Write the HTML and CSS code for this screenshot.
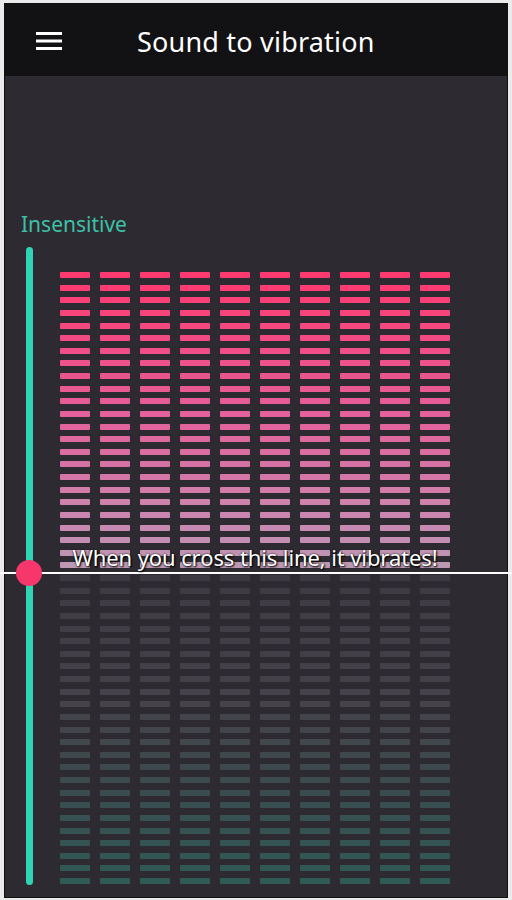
FILE: index.html
```html
<!DOCTYPE html>
<html lang="en">
<head>
<meta charset="utf-8">
<title>Sound to vibration</title>
<link rel="stylesheet" href="styles.css">
</head>
<body>
<div class="frame">
  <header class="appbar">
    <svg class="menu" width="26" height="18" viewBox="0 0 26 18">
      <rect x="0" y="0" width="26" height="3" fill="#fff"/>
      <rect x="0" y="7.5" width="26" height="3" fill="#fff"/>
      <rect x="0" y="15" width="26" height="3" fill="#fff"/>
    </svg>
    <h1 class="title">Sound to vibration</h1>
  </header>
  <main class="content">
    <div class="label">Insensitive</div>
    <div class="meter">
      <div class="track"></div>
      <div class="bars" id="bars">
        <div class="caption">When you cross this line, it vibrates!</div>
      </div>
    </div>
    <div class="threshold"></div>
    <div class="thumb"></div>
  </main>
</div>
<script src="script.js"></script>
</body>
</html>
```

FILE: styles.css
```css
html, body {
  margin: 0;
  padding: 0;
}
body {
  background: #ebebeb;
  font-family: "Noto Sans", "Open Sans", sans-serif;
}
.frame {
  margin: 3px 4px 0 4px;
  width: 502px;
  height: 893px;
  border: 1px solid #111;
  display: flex;
  flex-direction: column;
  background: #2e2a31;
}
.appbar {
  height: 70px;
  padding-top: 2px;
  background: #121113;
  display: flex;
  align-items: center;
  padding-left: 31px;
  flex: none;
}
.menu {
  display: block;
  flex: none;
}
.title {
  margin: 0 0 0 75px;
  padding-top: 2px;
  color: #fff;
  font-size: 27px;
  font-weight: 400;
  line-height: 32px;
  letter-spacing: 0.2px;
}
.content {
  position: relative;
  flex: 1;
  padding-top: 136px;
}
.label {
  margin-left: 16px;
  color: #3cc2a6;
  font-size: 21px;
  line-height: 24px;
  height: 24px;
}
.meter {
  margin-top: 11px;
  display: flex;
  padding-left: 21px;
}
.track {
  width: 7px;
  height: 638px;
  border-radius: 4px;
  background: #30d3b6;
  flex: none;
}
.bars {
  position: relative;
  margin-left: 27px;
  margin-top: 25px;
  display: flex;
  gap: 10px;
  width: 390px;
  height: 612px;
}
.col {
  width: 30px;
  height: 612px;
  display: flex;
  flex-direction: column;
  justify-content: space-between;
}
.bar {
  height: 6px;
  width: 30px;
  border-radius: 1px;
}
.caption {
  position: absolute;
  left: -30px;
  right: -30px;
  top: 271px;
  text-align: center;
  color: #fff;
  font-size: 22px;
  line-height: 28px;
  letter-spacing: -0.1px;
  text-shadow: 0 0 2px #000, 1px 1px 2px #000;
  white-space: nowrap;
  z-index: 1;
}
.threshold {
  position: absolute;
  left: -5px;
  right: -5px;
  top: 496px;
  height: 2px;
  background: #fff;
}
.thumb {
  position: absolute;
  left: 11px;
  top: 484px;
  width: 26px;
  height: 26px;
  border-radius: 50%;
  background: #f7366b;
}
```

FILE: script.js
```js
(function () {
  var ROWS = 49, COLS = 10, PITCH = 12.625, LINE = 300;
  var above = [[0, [254, 58, 112]], [140, [228, 96, 154]], [250, [200, 137, 176]], [300, [185, 155, 179]]];
  var below = [[300, [62, 58, 67]], [420, [70, 66, 75]], [520, [58, 76, 79]], [612, [47, 91, 86]]];
  function interp(stops, y) {
    for (var i = 0; i < stops.length - 1; i++) {
      var a = stops[i], b = stops[i + 1];
      if (y <= b[0]) {
        var t = (y - a[0]) / (b[0] - a[0]);
        if (t < 0) t = 0;
        var c = [0, 1, 2].map(function (k) { return Math.round(a[1][k] + (b[1][k] - a[1][k]) * t); });
        return "rgb(" + c.join(",") + ")";
      }
    }
    var l = stops[stops.length - 1][1];
    return "rgb(" + l.join(",") + ")";
  }
  var bars = document.getElementById("bars");
  var caption = bars.querySelector(".caption");
  for (var c = 0; c < COLS; c++) {
    var col = document.createElement("div");
    col.className = "col";
    for (var r = 0; r < ROWS; r++) {
      var y = r * PITCH;
      var bar = document.createElement("div");
      bar.className = "bar";
      bar.style.background = y < LINE ? interp(above, y) : interp(below, y);
      col.appendChild(bar);
    }
    bars.insertBefore(col, caption);
  }
})();
```
